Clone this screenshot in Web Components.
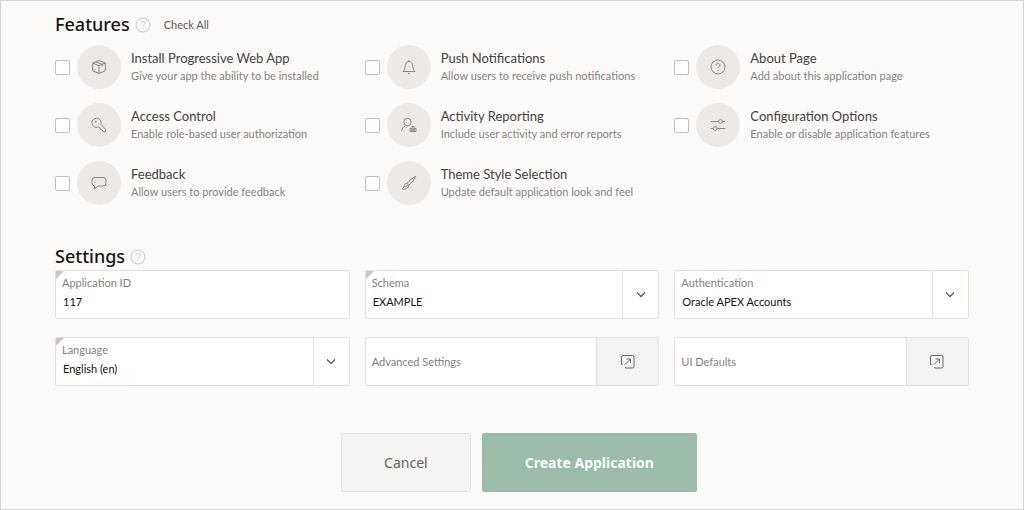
<!DOCTYPE html>
<html lang="en">
<head>
<meta charset="utf-8">
<meta name="viewport" content="width=device-width, initial-scale=1">
<title>Create an Application</title>
<style>
  body {
    margin: 0;
    --font-text: Lato, "Noto Sans", sans-serif;
    --font-display: "Noto Sans", "Open Sans", sans-serif;
    --line: #e4e2df;
    font: 11px/16px var(--font-text);
    color: #161513;
    background: #fcfbfa;
  }
</style>
</head>
<body>
<app-wizard>
  <wizard-section heading="Features" action="Check All">
    <feature-item name="Install Progressive Web App" icon="package">Give your app the ability to be installed</feature-item>
    <feature-item name="Push Notifications" icon="bell">Allow users to receive push notifications</feature-item>
    <feature-item name="About Page" icon="help">Add about this application page</feature-item>
    <feature-item name="Access Control" icon="key">Enable role-based user authorization</feature-item>
    <feature-item name="Activity Reporting" icon="user-chart">Include user activity and error reports</feature-item>
    <feature-item name="Configuration Options" icon="sliders">Enable or disable application features</feature-item>
    <feature-item name="Feedback" icon="comment">Allow users to provide feedback</feature-item>
    <feature-item name="Theme Style Selection" icon="brush">Update default application look and feel</feature-item>
  </wizard-section>
  <wizard-section heading="Settings" class="settings">
    <text-field label="Application ID" value="117" required></text-field>
    <select-field label="Schema" value="EXAMPLE" required></select-field>
    <select-field label="Authentication" value="Oracle APEX Accounts"></select-field>
    <select-field label="Language" value="English (en)" required></select-field>
    <dialog-field label="Advanced Settings"></dialog-field>
    <dialog-field label="UI Defaults"></dialog-field>
  </wizard-section>
  <wizard-button slot="actions">Cancel</wizard-button>
  <wizard-button slot="actions" primary>Create Application</wizard-button>
</app-wizard>

<script>
const ICONS = {
  package: '<path d="M8 1.5 14.3 4v7.8L8 14.5l-6.3-2.7V4zM1.7 4 8 6.7 14.3 4M8 6.7v7.8M4.8 2.8 11.2 5.4v2.2M4 10.2v1"/>',
  bell: '<path d="M2 12.5h12c-1.6-1.4-2-3-2.2-5.2C11.500 4 10.300 2.500 8 2.500S4.500 4 4.200 7.300C4 9.500 3.600 11.100 2 12.500zM8 1v1.500M7 14.500h2"/>',
  help: '<circle cx="8" cy="8" r="7"/><path d="M6 6.400C6 5 6.900 4.300 8 4.300s2 .7 2 1.900c0 1.500-2 1.500-2 3.200M8 11v1"/>',
  key: '<path d="M7.200 10.100A4.600 4.600 0 1 1 9.900 7.200l4.700 5.200v2.300h-2.500l-.8-1.700-1.700-.6-.5-1.500z"/><circle cx="4.700" cy="4.700" r=".6"/>',
  'user-chart': '<circle cx="6.500" cy="5" r="3.700"/><path d="M.7 14c.3-2.500 1.500-4.100 3.700-5.200M9 14.500v-3h2v3M11 14.500V9.500h2v5M13 14.500v-3h2v3zM9 14.500h6"/>',
  sliders: '<circle cx="10.500" cy="4.500" r="1.900"/><circle cx="5" cy="11.500" r="1.900"/><path d="M.7 4.500h7.900M12.400 4.500h2.400M.7 11.500h2.400M6.900 11.500h8.400"/>',
  comment: '<path d="M4 2.500h8a3 3 0 0 1 3 3V8a3 3 0 0 1-3 3H7l-3.500 3V11A3 3 0 0 1 1 8V5.500a3 3 0 0 1 3-3z"/>',
  brush: '<path d="M14.800 1.300C11.500 3 8.300 5.500 6.100 8.400l1.800 1.700c3-2.300 5.400-5.500 6.900-8.800zM6.100 8.400C4.700 8 3.600 9 3.300 10.800 3 12.100 2 13.300.9 14c3.200.7 6.700-.6 7-3.900M3.800 12.600l3-2.700"/>',
  open: '<path d="M2.500 10.500h-1V3A1.500 1.500 0 0 1 3 1.500h9.500A1.500 1.500 0 0 1 14 3v9.500a1.500 1.500 0 0 1-1.500 1.500H5.500v-1M5 10.500l5.500-5.500M6.500 5h4v4"/>',
  chevron: '<path d="m4 5.500 4 4 4-4"/>'
};

function define(tag, render) {
  customElements.define(tag, class extends HTMLElement {
    constructor() {
      super();
      this.attachShadow({ mode: 'open' });
    }
    connectedCallback() {
      this.shadowRoot.innerHTML = render(name => this.getAttribute(name) || '', this);
    }
  });
}

const FIELD_STYLE = `
  :host { display: block; min-width: 0; }
  * { box-sizing: border-box; }
  .field {
    display: grid; position: relative; height: 49px;
    background: #fff; border: 1px solid var(--line); border-radius: 2px;
  }
  .required::before {
    content: ""; position: absolute; top: 0; left: 0;
    border: solid transparent; border-width: 8px 8px 0 0; border-top-color: #c9c7c4;
  }
  label { padding: 4px 6px; color: #858280; }
  input, select {
    width: 100%; margin: 0; padding: 15px 7px 0; border: 0; background: none;
    font: inherit; color: #161513; appearance: none; border-radius: 2px;
  }`;

define('app-icon', attr => `
  <style>
    :host { display: inline-flex; }
    svg { width: var(--icon-size, 16px); height: var(--icon-size, 16px);
      fill: none; stroke: currentColor; stroke-width: var(--icon-stroke, 1); stroke-linejoin: round; }
  </style>
  <svg viewBox="0 0 16 16" aria-hidden="true">${ICONS[attr('name')]}</svg>`);

define('app-wizard', () => `
  <style>
    :host { display: flex; flex-direction: column; box-sizing: border-box; min-height: 100vh;
      padding: 10px 54px 16px; border: 1px solid #d8d6d4; }
    footer { display: flex; justify-content: center; gap: 11px; padding: 47px 0 0 14px; }
  </style>
  <main><slot></slot></main>
  <footer><slot name="actions"></slot></footer>`);

define('wizard-section', attr => `
  <style>
    :host { display: block; }
    :host(.settings) { margin-top: 38px; }
    header { display: flex; align-items: center; height: 27px; }
    h2 { margin: 0; font: 500 18px/27px var(--font-display); color: #161513; }
    button { padding: 0; border: 0; background: none; font: inherit; color: #5b5855; cursor: pointer; }
    .help { display: flex; margin: 0 13px 0 5px; color: #c9c7c4; }
    .grid { display: grid; grid-template-columns: repeat(3, minmax(0, 1fr)); gap: 14px 15px; margin-top: 7px; }
    :host(.settings) .grid { row-gap: 18px; margin-top: 0; }
  </style>
  <header>
    <h2>${attr('heading')}</h2>
    <button class="help" type="button" aria-label="Help"><app-icon name="help"></app-icon></button>
    ${attr('action') ? `<button type="button">${attr('action')}</button>` : ''}
  </header>
  <div class="grid"><slot></slot></div>`);

define('feature-item', attr => `
  <style>
    :host { display: block; min-width: 0; }
    label { display: flex; align-items: center; }
    input { appearance: none; box-sizing: border-box; width: 15px; height: 15px; margin: 0;
      border: 1px solid #c4c1be; border-radius: 2px; background: #fff; }
    input:checked { background: #5f7d4f; }
    .badge { display: flex; flex: none; align-items: center; justify-content: center;
      width: 44px; height: 44px; margin: 0 10px 0 7px; border-radius: 50%;
      background: #ece9e6; color: #8a8784; }
    .name { display: block; font-size: 13px; line-height: 18px; color: #45423f; }
    .note { display: block; line-height: 18px; color: #858280; }
  </style>
  <label>
    <input type="checkbox">
    <span class="badge"><app-icon name="${attr('icon')}"></app-icon></span>
    <span><span class="name">${attr('name')}</span><span class="note"><slot></slot></span></span>
  </label>`);

define('text-field', (attr, el) => `
  <style>${FIELD_STYLE} label, input { grid-area: 1 / 1; }</style>
  <div class="field ${el.hasAttribute('required') ? 'required' : ''}">
    <label for="control">${attr('label')}</label>
    <input id="control" type="text" value="${attr('value')}">
  </div>`);

define('select-field', (attr, el) => `
  <style>${FIELD_STYLE}
    .field { grid-template-columns: minmax(0, 1fr) 36px; }
    label { grid-area: 1 / 1; }
    select { grid-area: 1 / 1 / 2 / 3; }
    .arrow { grid-area: 1 / 2; display: flex; align-items: center; justify-content: center;
      border-left: 1px solid var(--line); color: #5b5855; pointer-events: none; --icon-stroke: 1.25; }
  </style>
  <div class="field ${el.hasAttribute('required') ? 'required' : ''}">
    <label for="control">${attr('label')}</label>
    <select id="control"><option>${attr('value')}</option></select>
    <span class="arrow"><app-icon name="chevron"></app-icon></span>
  </div>`);

define('dialog-field', attr => `
  <style>${FIELD_STYLE}
    .field { grid-template-columns: minmax(0, 1fr) 62px; align-items: center; }
    button { display: flex; align-items: center; justify-content: center; align-self: stretch;
      margin: 0; padding: 0; border: 0; border-left: 1px solid var(--line); background: #f5f3f2; color: #6b6865; cursor: pointer; }
  </style>
  <div class="field">
    <label for="control">${attr('label')}</label>
    <button id="control" type="button"><app-icon name="open"></app-icon></button>
  </div>`);

define('wizard-button', () => `
  <style>
    :host { display: block; }
    button { height: 59px; padding: 0 42px; border: 1px solid #e6e4e1; border-radius: 2px;
      background: #f5f4f2; color: #65625f; font: 400 14px/20px var(--font-display); cursor: pointer; }
    :host([primary]) button { border-color: #9abca8; background: #9abca8; color: #fcfbfa; font-weight: 700; }
  </style>
  <button type="button"><slot></slot></button>`);
</script>
</body>
</html>
